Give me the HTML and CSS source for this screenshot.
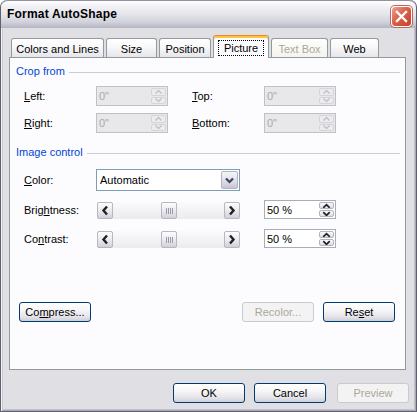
FILE: index.html
```html
<!DOCTYPE html>
<html>
<head>
<meta charset="utf-8">
<title>Format AutoShape</title>
<link rel="stylesheet" href="styles.css">
</head>
<body>
<div class="window">
  <div class="titlebar">
    <span class="title">Format AutoShape</span>
    <span class="close"><svg width="19" height="19" viewBox="0 0 19 19"><path d="M5 5 L14 14 M14 5 L5 14" stroke="#fff" stroke-width="2.4" stroke-linecap="square"/></svg></span>
  </div>
  <div class="client">
    <div class="tabs">
      <div class="tab t1">Colors and Lines</div>
      <div class="tab t2">Size</div>
      <div class="tab t3">Position</div>
      <div class="tab t4 sel"><span class="focus">Picture</span></div>
      <div class="tab t5 dis">Text Box</div>
      <div class="tab t6">Web</div>
    </div>
    <div class="panel">
      <div class="group">Crop from</div>
      <div class="crop">
        <span class="lbl"><u>L</u>eft:</span>
        <div class="edit off"><span>0"</span><div class="spin off"><span class="sb"><svg width="13" height="8" viewBox="0 0 13 8"><polyline points="3.5,5.5 6.5,2.5 9.5,5.5" fill="none" stroke="#c2c2c8" stroke-width="1.5"/></svg></span><span class="sb"><svg width="13" height="8" viewBox="0 0 13 8"><polyline points="3.5,2.5 6.5,5.5 9.5,2.5" fill="none" stroke="#c2c2c8" stroke-width="1.5"/></svg></span></div></div>
        <span class="lbl"><u>T</u>op:</span>
        <div class="edit off"><span>0"</span><div class="spin off"><span class="sb"><svg width="13" height="8" viewBox="0 0 13 8"><polyline points="3.5,5.5 6.5,2.5 9.5,5.5" fill="none" stroke="#c2c2c8" stroke-width="1.5"/></svg></span><span class="sb"><svg width="13" height="8" viewBox="0 0 13 8"><polyline points="3.5,2.5 6.5,5.5 9.5,2.5" fill="none" stroke="#c2c2c8" stroke-width="1.5"/></svg></span></div></div>
        <span class="lbl"><u>R</u>ight:</span>
        <div class="edit off"><span>0"</span><div class="spin off"><span class="sb"><svg width="13" height="8" viewBox="0 0 13 8"><polyline points="3.5,5.5 6.5,2.5 9.5,5.5" fill="none" stroke="#c2c2c8" stroke-width="1.5"/></svg></span><span class="sb"><svg width="13" height="8" viewBox="0 0 13 8"><polyline points="3.5,2.5 6.5,5.5 9.5,2.5" fill="none" stroke="#c2c2c8" stroke-width="1.5"/></svg></span></div></div>
        <span class="lbl"><u>B</u>ottom:</span>
        <div class="edit off"><span>0"</span><div class="spin off"><span class="sb"><svg width="13" height="8" viewBox="0 0 13 8"><polyline points="3.5,5.5 6.5,2.5 9.5,5.5" fill="none" stroke="#c2c2c8" stroke-width="1.5"/></svg></span><span class="sb"><svg width="13" height="8" viewBox="0 0 13 8"><polyline points="3.5,2.5 6.5,5.5 9.5,2.5" fill="none" stroke="#c2c2c8" stroke-width="1.5"/></svg></span></div></div>
      </div>
      <div class="group g2">Image control</div>
      <div class="img">
        <span class="lbl"><u>C</u>olor:</span>
        <div class="combo"><span>Automatic</span><span class="drop"><svg width="15" height="18" viewBox="0 0 15 18"><polyline points="4,7.5 7.5,11 11,7.5" fill="none" stroke="#3a4660" stroke-width="2.2"/></svg></span></div>
        <span></span>
        <span class="lbl">Brig<u>h</u>tness:</span>
        <div class="scroll">
          <span class="sbtn"><svg width="14" height="15" viewBox="0 0 14 15"><polyline points="9,3.5 5.5,7.5 9,11.5" fill="none" stroke="#222" stroke-width="2.4"/></svg></span>
          <span class="thumb"><svg width="14" height="15" viewBox="0 0 14 15"><path d="M4.5 5v6M6.5 5v6M8.5 5v6M10.5 5v6" stroke="#9a9aa6" stroke-width="1"/></svg></span>
          <span class="sbtn"><svg width="14" height="15" viewBox="0 0 14 15"><polyline points="5,3.5 8.5,7.5 5,11.5" fill="none" stroke="#222" stroke-width="2.4"/></svg></span>
        </div>
        <div class="edit on"><span>50 %</span><div class="spin"><span class="sb"><svg width="14" height="8" viewBox="0 0 14 8"><polyline points="3.5,6 7,2.5 10.5,6" fill="none" stroke="#222" stroke-width="1.8"/></svg></span><span class="sb"><svg width="14" height="8" viewBox="0 0 14 8"><polyline points="3.5,2 7,5.5 10.5,2" fill="none" stroke="#222" stroke-width="1.8"/></svg></span></div></div>
        <span class="lbl">Co<u>n</u>trast:</span>
        <div class="scroll">
          <span class="sbtn"><svg width="14" height="15" viewBox="0 0 14 15"><polyline points="9,3.5 5.5,7.5 9,11.5" fill="none" stroke="#222" stroke-width="2.4"/></svg></span>
          <span class="thumb"><svg width="14" height="15" viewBox="0 0 14 15"><path d="M4.5 5v6M6.5 5v6M8.5 5v6M10.5 5v6" stroke="#9a9aa6" stroke-width="1"/></svg></span>
          <span class="sbtn"><svg width="14" height="15" viewBox="0 0 14 15"><polyline points="5,3.5 8.5,7.5 5,11.5" fill="none" stroke="#222" stroke-width="2.4"/></svg></span>
        </div>
        <div class="edit on"><span>50 %</span><div class="spin"><span class="sb"><svg width="14" height="8" viewBox="0 0 14 8"><polyline points="3.5,6 7,2.5 10.5,6" fill="none" stroke="#222" stroke-width="1.8"/></svg></span><span class="sb"><svg width="14" height="8" viewBox="0 0 14 8"><polyline points="3.5,2 7,5.5 10.5,2" fill="none" stroke="#222" stroke-width="1.8"/></svg></span></div></div>
      </div>
      <div class="btnrow">
        <button class="btn">Co<u>m</u>press...</button>
        <button class="btn dis push">Recolor...</button>
        <button class="btn">Re<u>s</u>et</button>
      </div>
    </div>
    <div class="footer">
      <button class="btn">OK</button>
      <button class="btn">Cancel</button>
      <button class="btn dis wide">Preview</button>
    </div>
  </div>
</div>
</body>
</html>
```
FILE: styles.css
```css
html, body {
  margin: 0;
  background: #ffffff;
}
body {
  font: 11px "Liberation Sans", Arial, sans-serif;
  color: #000;
}
.window {
  width: 417px;
  height: 412px;
  box-sizing: border-box;
  background: #e0dfe3;
  border: 1px solid #5f5f70;
  border-top: 0;
  border-radius: 7px 7px 0 0;
  overflow: hidden;
  display: flex;
  flex-direction: column;
  box-shadow: inset 1px 0 #f4f4f7, inset -1px 0 #a9a9b6, inset 0 -1px #a9a9b6,
              inset 2px 0 #c9c9d3, inset -2px 0 #c2c2cd, inset 0 -2px #c2c2cd;
}
.titlebar {
  height: 28px;
  flex: none;
  box-sizing: border-box;
  display: flex;
  justify-content: space-between;
  align-items: flex-start;
  padding: 0 4px 0 6px;
  background: linear-gradient(#ffffff 0%, #f3f3f6 18%, #e4e4ea 50%, #d2d2db 78%, #b4b4c2 100%);
  border-radius: 7px 7px 0 0;
  border-top: 1px solid #9090a0;
}
.title {
  font-weight: bold;
  font-size: 12px;
  line-height: 27px;
  letter-spacing: 0.2px;
}
.close {
  margin-top: 5px;
  width: 21px;
  height: 21px;
  box-sizing: border-box;
  border: 1px solid #fff;
  border-radius: 4px;
  background: linear-gradient(135deg, #f0a08e 0%, #dc5f48 45%, #c73e2a 100%);
  box-shadow: 0 0 0 1px #b46a60;
  display: flex;
  align-items: center;
  justify-content: center;
}
.client {
  flex: 1;
  padding: 7px 10px 0 8px;
}
.tabs {
  display: flex;
  gap: 2px;
  height: 22px;
  align-items: flex-end;
  padding-left: 2px;
  position: relative;
  z-index: 1;
}
.tab {
  box-sizing: border-box;
  height: 19px;
  border: 1px solid #919b9c;
  border-bottom: 0;
  border-radius: 3px 3px 0 0;
  background: linear-gradient(#ffffff, #f8f8fa 45%, #e5e5eb);
  text-align: center;
  padding-top: 3px;
  line-height: 14px;
  white-space: nowrap;
}
.t1 { width: 93px; }
.t2 { width: 51px; }
.t3 { width: 52px; }
.t4 { width: 56px; }
.t5 { width: 57px; }
.t6 { width: 49px; }
.tab.sel {
  height: 23px;
  margin-bottom: -1px;
  background: #fcfcfe;
  border-top: 1px solid #e68b2c;
  box-shadow: inset 0 2px #ffc73c;
  padding-top: 4px;
}
.focus {
  display: inline-block;
  border: 1px dotted #000;
  padding: 0 5px;
  line-height: 14px;
}
.tab.dis {
  color: #aca899;
  background: linear-gradient(#fefefd, #f4f3ee);
}
.panel {
  box-sizing: border-box;
  width: 397px;
  height: 313px;
  border: 1px solid #919b9c;
  background: #fcfcfe;
  padding: 7px 5px 0 6px;
}
.group {
  display: flex;
  align-items: center;
  color: #0046d5;
  line-height: 13px;
}
.group::after {
  content: "";
  flex: 1;
  height: 1px;
  background: #cdcdd0;
  margin: 2px 0 0 4px;
}
.g2 { margin-top: 13px; }
.lbl { white-space: nowrap; }
.crop {
  display: grid;
  grid-template-columns: 72px 96px 72px 72px;
  grid-auto-rows: 20px;
  row-gap: 7px;
  margin: 8px 0 0 8px;
  align-items: center;
}
.edit {
  box-sizing: border-box;
  width: 72px;
  height: 20px;
  border: 1px solid #a7aeb8;
  background: #fff;
  display: flex;
  align-items: center;
  padding-left: 2px;
}
.edit.off {
  background: #e8e8ea;
  border-color: #c0c0c6;
  color: #a8a8ae;
}
.edit.on {
  height: 19px;
  align-self: start;
}
.spin {
  margin-left: auto;
  width: 16px;
  height: 100%;
  display: flex;
  flex-direction: column;
  gap: 1px;
  padding: 1px 1px 1px 0;
  box-sizing: border-box;
}
.sb {
  flex: 1;
  display: flex;
  align-items: center;
  justify-content: center;
  border: 1px solid #b4b4be;
  border-radius: 2px;
  background: linear-gradient(#fbfbfd, #dcdce4);
  overflow: hidden;
}
.spin.off .sb {
  border-color: #d4d4da;
  background: #ececee;
}
.img {
  display: grid;
  grid-template-columns: 72px 168px 72px;
  grid-template-rows: 22px 20px 20px;
  row-gap: 9px;
  margin: 10px 0 0 8px;
  align-items: center;
}
.combo {
  box-sizing: border-box;
  width: 144px;
  height: 22px;
  border: 1px solid #7f9db9;
  background: #fff;
  display: flex;
  align-items: center;
  padding: 1px 1px 1px 3px;
}
.drop {
  margin-left: auto;
  box-sizing: border-box;
  width: 17px;
  height: 100%;
  border: 1px solid #b2b4c4;
  border-radius: 2px;
  background: linear-gradient(#f6f6f9, #d8d8e2 70%, #c6c6d2);
  display: flex;
  align-items: center;
  justify-content: center;
}
.scroll {
  box-sizing: border-box;
  width: 143px;
  height: 17px;
  margin-left: 1px;
  display: flex;
  justify-content: space-between;
  background: linear-gradient(#fafafb, #ebebef);
}
.sbtn, .thumb {
  box-sizing: border-box;
  width: 16px;
  height: 17px;
  border: 1px solid #b7b7c2;
  border-radius: 2px;
  background: linear-gradient(#fdfdfe, #e6e6ec 60%, #d0d0da);
  display: flex;
  align-items: center;
  justify-content: center;
}
.btnrow {
  display: flex;
  gap: 9px;
  margin: 53px 5px 0 3px;
}
.btn {
  box-sizing: border-box;
  width: 72px;
  height: 20px;
  padding: 0;
  margin: 0;
  font: inherit;
  color: #000;
  border: 1px solid #003c74;
  border-radius: 3px;
  background: linear-gradient(#ffffff 0%, #f6f6f8 40%, #e4e4ea 75%, #cfcfd9 100%);
  text-align: center;
  line-height: 18px;
}
.btn.dis {
  color: #aca899;
  border-color: #c9c9cf;
  background: #f3f3f3;
}
.push { margin-left: auto; }
.footer {
  display: flex;
  justify-content: flex-end;
  gap: 9px;
  margin: 13px -3px 0 0;
}
.footer .wide { margin-left: 2px; }
```
